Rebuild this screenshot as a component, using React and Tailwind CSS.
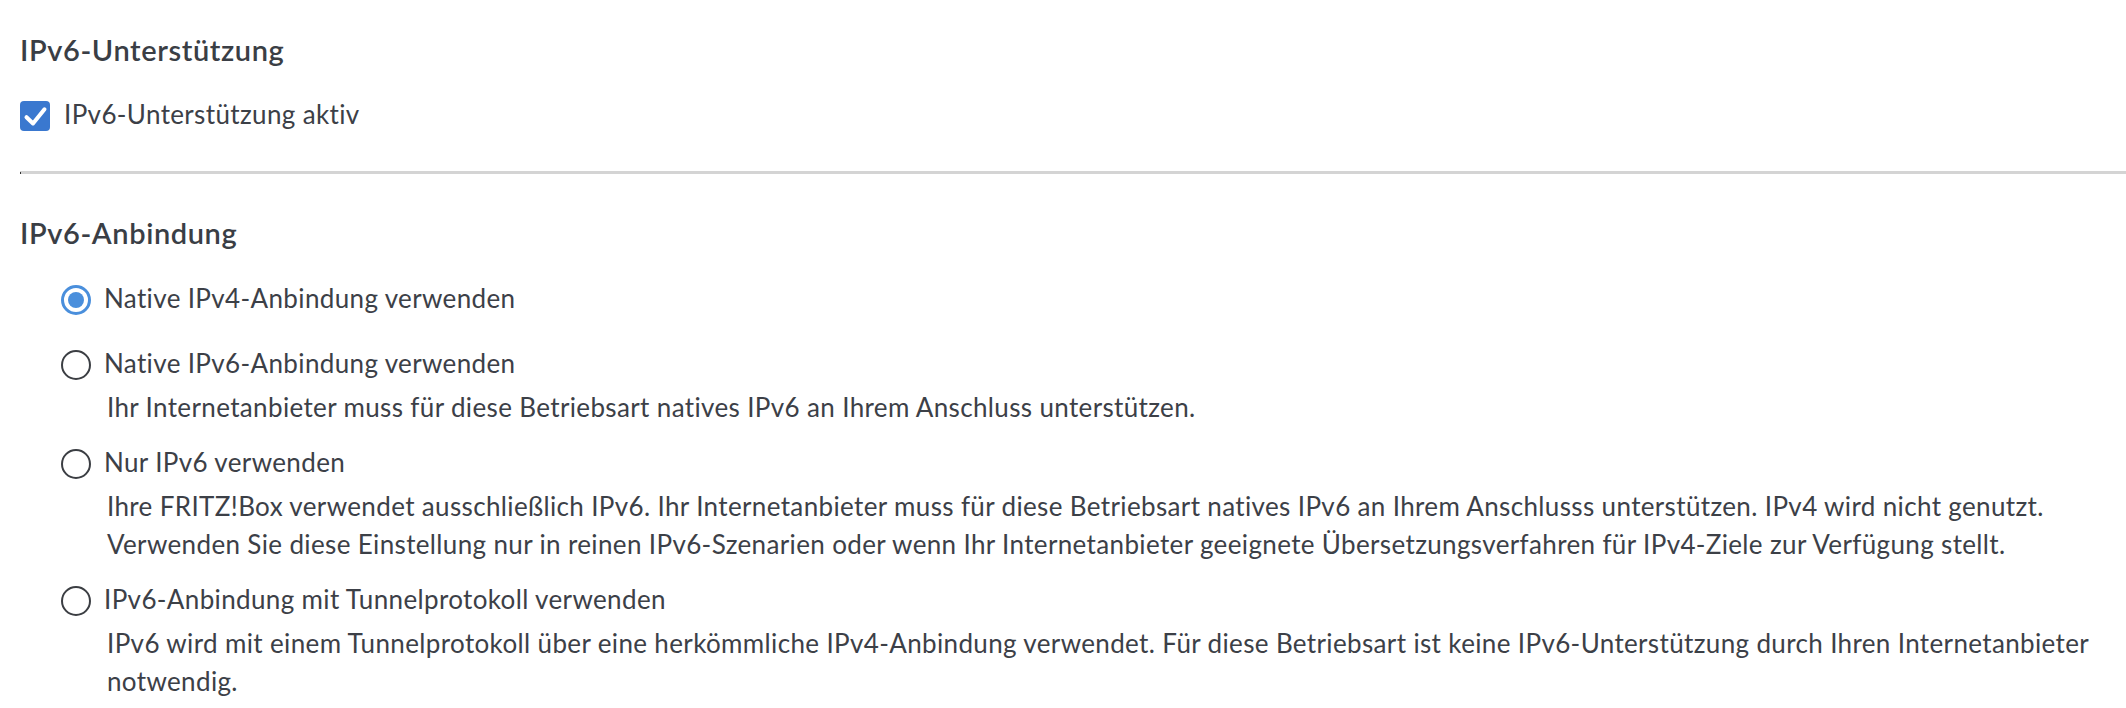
function Radio({ checked }) {
  if (checked) {
    return (
      <div className="mt-[6px] w-[30px] h-[30px] shrink-0 rounded-full border-[3px] border-[#4a8fdc] bg-white flex items-center justify-center">
        <div className="w-[16px] h-[16px] rounded-full bg-[#4a8fdc]"></div>
      </div>
    );
  }
  return <div className="mt-[6px] w-[30px] h-[30px] shrink-0 rounded-full border-[2.5px] border-[#3b3e43] bg-white"></div>;
}

function Option({ checked, label, desc, className }) {
  return (
    <div className={"flex items-start gap-[13px] " + (className || "")}>
      <Radio checked={checked} />
      <div className="flex flex-col min-w-0 flex-1">
        <div className="leading-[38px]">{label}</div>
        {desc && <div className="mt-[6px] pl-[3px] leading-[38px]">{desc}</div>}
      </div>
    </div>
  );
}

export default function App() {
  return (
    <div
      className="bg-white w-[2126px] h-[708px] overflow-hidden pl-[20px] text-[#3c4047] text-[26px] tracking-[0.36px]"
      style={{ fontFamily: "Lato, 'Liberation Sans', sans-serif" }}
    >
      <h2 className="pt-[32px] text-[29px] leading-[36px] font-semibold tracking-[0.6px] text-[#3a3e45]">
        IPv6-Unterstützung
      </h2>

      <label className="mt-[33px] flex items-center h-[30px]">
        <span className="w-[30px] h-[30px] shrink-0 rounded-[4px] bg-[#3a78cf] flex items-center justify-center">
          <svg width="30" height="30" viewBox="0 0 30 30" fill="none">
            <polyline
              points="6.5,16.2 13,22.5 24.5,8.3"
              stroke="white"
              strokeWidth="4"
              strokeLinecap="round"
              strokeLinejoin="round"
            />
          </svg>
        </span>
        <span className="ml-[14px] pb-[4px] leading-[30px]">IPv6-Unterstützung aktiv</span>
      </label>

      <div className="mt-[40px] flex items-center h-[3px] bg-[#d4d4d4]">
        <div className="w-[1px] h-[2px] bg-[#333333]"></div>
      </div>

      <h2 className="mt-[41px] text-[29px] leading-[36px] font-semibold tracking-[0.6px] text-[#3a3e45]">
        IPv6-Anbindung
      </h2>

      <div className="mt-[28px] ml-[41px] flex flex-col">
        <Option checked label="Native IPv4-Anbindung verwenden" className="mb-[27px]" />
        <Option
          label="Native IPv6-Anbindung verwenden"
          desc="Ihr Internetanbieter muss für diese Betriebsart natives IPv6 an Ihrem Anschluss unterstützen."
          className="mb-[17px]"
        />
        <Option
          label="Nur IPv6 verwenden"
          desc="Ihre FRITZ!Box verwendet ausschließlich IPv6. Ihr Internetanbieter muss für diese Betriebsart natives IPv6 an Ihrem Anschlusss unterstützen. IPv4 wird nicht genutzt. Verwenden Sie diese Einstellung nur in reinen IPv6-Szenarien oder wenn Ihr Internetanbieter geeignete Übersetzungsverfahren für IPv4-Ziele zur Verfügung stellt."
          className="mb-[17px]"
        />
        <Option
          label="IPv6-Anbindung mit Tunnelprotokoll verwenden"
          desc="IPv6 wird mit einem Tunnelprotokoll über eine herkömmliche IPv4-Anbindung verwendet. Für diese Betriebsart ist keine IPv6-Unterstützung durch Ihren Internetanbieter notwendig."
        />
      </div>
    </div>
  );
}
